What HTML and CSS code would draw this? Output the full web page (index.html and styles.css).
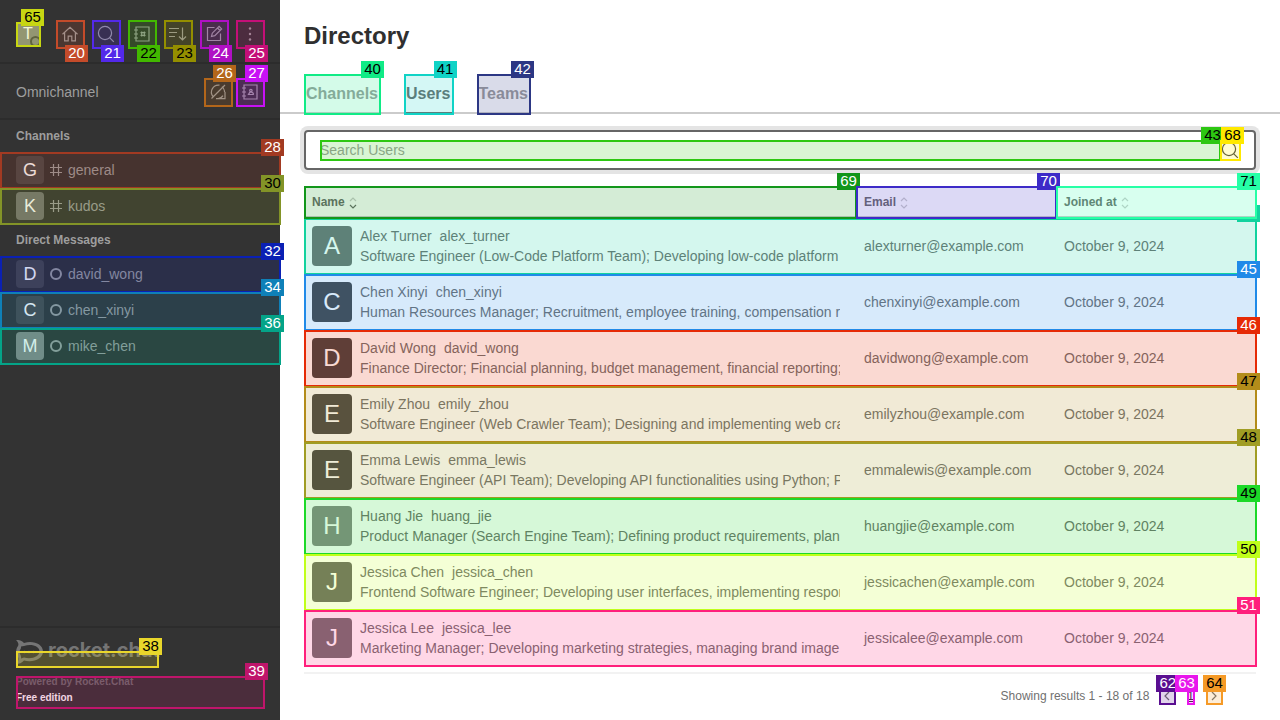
FILE: index.html
```html
<!DOCTYPE html>
<html lang="en">
<head>
<meta charset="utf-8">
<meta name="viewport" content="width=device-width, initial-scale=1">
<title>Directory</title>
<link rel="stylesheet" href="styles.css">
</head>
<body>
<svg class="defs" aria-hidden="true">
  <symbol id="hash" viewBox="0 0 12 12"><path d="M3.5 0v12M8.5 0v12M0 3.5h12M0 8.5h12"/></symbol>
  <symbol id="ring" viewBox="0 0 12 12"><circle cx="6" cy="6" r="5" stroke-width="2"/></symbol>
  <symbol id="search" viewBox="0 0 20 20"><circle cx="9" cy="9" r="6.6"/><path d="M13.8 13.8l4 4"/></symbol>
  <symbol id="sort" viewBox="0 0 8 12"><path class="up" d="M1 4l3-3 3 3"/><path class="down" d="M1 8l3 3 3-3"/></symbol>
</svg>
<div class="app">
  <aside class="sidebar">
    <header class="topbar">
      <button class="avatar avatar-me" aria-label="User menu">T<i class="presence"></i><span class="mark c65"><b>65</b></span></button>
      <div class="tools">
        <button class="tool" aria-label="Home"><svg viewBox="0 0 20 20"><path d="M2.5 10.2L10 3.4l7.500 6.800M4.600 8.600v8.200h3.600v-4.700h3.600v4.700h3.600V8.600"/></svg><span class="mark below c20"><b>20</b></span></button>
        <button class="tool" aria-label="Search"><svg><use href="#search"/></svg><span class="mark below c21"><b>21</b></span></button>
        <button class="tool" aria-label="Directory"><svg viewBox="0 0 20 20"><path d="M4 3h13v14H4zM2 6h4M2 10h4M2 14h4M9.700 7.500v5M12.300 7.500v5M8.500 8.700h5M8.500 11.300h5"/></svg><span class="mark below dark c22"><b>22</b></span></button>
        <button class="tool" aria-label="Sort"><svg viewBox="0 0 20 20"><path d="M1 4.500h10M1 8.500h8M1 12.500h6M14.500 3.500v12M11 12.500l3.500 3.500 3.500-3.500"/></svg><span class="mark below dark c23"><b>23</b></span></button>
        <button class="tool" aria-label="Create new"><svg viewBox="0 0 20 20"><path d="M10.500 3.500h-7v13h13v-7M7.500 12.500l.8-3.300 6.800-6.800 2.500 2.500-6.800 6.800zM13.500 4l2.500 2.500"/></svg><span class="mark below c24"><b>24</b></span></button>
        <button class="tool" aria-label="More"><svg viewBox="0 0 20 20"><g class="dots"><circle cx="10" cy="4.500" r="1.200"/><circle cx="10" cy="10" r="1.200"/><circle cx="10" cy="15.500" r="1.200"/></g></svg><span class="mark below c25"><b>25</b></span></button>
      </div>
    </header>
    <section class="omni">
      <h2>Omnichannel</h2>
      <div class="tools">
        <button class="tool" aria-label="Turn on answer chats"><svg viewBox="0 0 20 20"><path d="M16.500 10V9A7 7 0 0 0 14 4.600M11.500 3.200A7 7 0 0 0 5 14.500M3.500 16.500L17 3M8 16.600h9v-6.600M8 16.600a7 7 0 0 0 7-3"/></svg><span class="mark c26"><b>26</b></span></button>
        <button class="tool" aria-label="Contacts"><svg viewBox="0 0 20 20"><path d="M4 3h13v14H4zM2 6h4M2 10h4M2 14h4M8.500 12.500h4.800v-1.300l-1.400-1h-2z"/><circle cx="10.900" cy="8.500" r="1.200"/></svg><span class="mark c27"><b>27</b></span></button>
      </div>
    </section>
    <nav class="rooms">
      <h3>Channels</h3>
      <a class="room" href="#"><span class="avatar g72">G</span><svg><use href="#hash"/></svg>general<span class="mark c28"><b>28</b></span></a>
      <a class="room" href="#"><span class="avatar g115">K</span><svg><use href="#hash"/></svg>kudos<span class="mark dark c30"><b>30</b></span></a>
      <h3>Direct Messages</h3>
      <a class="room" href="#"><span class="avatar g72">D</span><svg><use href="#ring"/></svg>david_wong<span class="mark c32"><b>32</b></span></a>
      <a class="room" href="#"><span class="avatar g72">C</span><svg><use href="#ring"/></svg>chen_xinyi<span class="mark c34"><b>34</b></span></a>
      <a class="room" href="#"><span class="avatar g136">M</span><svg><use href="#ring"/></svg>mike_chen<span class="mark c36"><b>36</b></span></a>
    </nav>
    <footer class="side-footer">
      <a class="logo" href="#"><svg viewBox="0 0 28 24" aria-hidden="true"><path class="flame" fill-rule="evenodd" d="M0 0C3 0 6 .5 8 3c9-3 19 1 19 8.500S17 23 8 20.500C6 23 3 24 0 24c2-2 3-4.500 2-7-2.500-3-2.500-7.500 0-11C3 4 2 2 0 0zM5 6.500c.5 2-1.500 3-1.500 5.500 0 2.500 2 3 1.500 6.500l3-1c8 2 15.500-1 15.500-6S16 3.500 8 6z"/><g class="flame"><circle cx="8.500" cy="12" r="1.200"/><circle cx="13" cy="12" r="1.200"/><circle cx="17.500" cy="12" r="1.200"/></g></svg><span>rocket.chat</span><span class="mark dark c38"><b>38</b></span></a>
      <div class="edition"><span class="powered">Powered by Rocket.Chat</span><a href="#">Free edition</a><span class="mark c39"><b>39</b></span></div>
    </footer>
  </aside>

  <main class="main">
    <h1>Directory</h1>
    <div class="tabs" role="tablist">
      <button class="tab" role="tab">Channels<span class="mark dark c40"><b>40</b></span></button>
      <button class="tab selected" role="tab" aria-selected="true">Users<span class="mark dark c41"><b>41</b></span></button>
      <button class="tab" role="tab">Teams<span class="mark c42"><b>42</b></span></button>
    </div>
    <div class="content">
      <div class="search">
        <label class="field"><input type="text" placeholder="Search Users" aria-label="Search Users"><span class="mark dark c43"><b>43</b></span></label>
        <span class="field-icon"><svg><use href="#search"/></svg><span class="mark dark c68"><b>68</b></span></span>
      </div>
      <table>
        <colgroup><col><col class="col-side"><col class="col-side"></colgroup>
        <thead><tr>
          <th scope="col">Name<svg class="sort asc"><use href="#sort"/></svg><span class="mark c69"><b>69</b></span></th>
          <th scope="col">Email<svg class="sort"><use href="#sort"/></svg><span class="mark c70"><b>70</b></span></th>
          <th scope="col">Joined at<svg class="sort"><use href="#sort"/></svg><span class="mark dark c71"><b>71</b></span></th>
        </tr></thead>
        <tbody>
          <tr><td><div class="person"><span class="avatar g112">A</span><div class="info"><div><span>Alex Turner</span><span class="user">alex_turner</span></div><div>Software Engineer (Low-Code Platform Team); Developing low-code platform</div></div></div><span class="mark dark c44"><b></b></span></td><td>alexturner@example.com</td><td>October 9, 2024</td></tr>
          <tr><td><div class="person"><span class="avatar g70">C</span><div class="info"><div><span>Chen Xinyi</span><span class="user">chen_xinyi</span></div><div>Human Resources Manager; Recruitment, employee training, compensation review</div></div></div><span class="mark c45"><b>45</b></span></td><td>chenxinyi@example.com</td><td>October 9, 2024</td></tr>
          <tr><td><div class="person"><span class="avatar g66">D</span><div class="info"><div><span>David Wong</span><span class="user">david_wong</span></div><div>Finance Director; Financial planning, budget management, financial reporting; Finance</div></div></div><span class="mark c46"><b>46</b></span></td><td>davidwong@example.com</td><td>October 9, 2024</td></tr>
          <tr><td><div class="person"><span class="avatar g70">E</span><div class="info"><div><span>Emily Zhou</span><span class="user">emily_zhou</span></div><div>Software Engineer (Web Crawler Team); Designing and implementing web crawlers</div></div></div><span class="mark dark c47"><b>47</b></span></td><td>emilyzhou@example.com</td><td>October 9, 2024</td></tr>
          <tr><td><div class="person"><span class="avatar g70">E</span><div class="info"><div><span>Emma Lewis</span><span class="user">emma_lewis</span></div><div>Software Engineer (API Team); Developing API functionalities using Python; Python</div></div></div><span class="mark dark c48"><b>48</b></span></td><td>emmalewis@example.com</td><td>October 9, 2024</td></tr>
          <tr><td><div class="person"><span class="avatar g136">H</span><div class="info"><div><span>Huang Jie</span><span class="user">huang_jie</span></div><div>Product Manager (Search Engine Team); Defining product requirements, planning</div></div></div><span class="mark dark c49"><b>49</b></span></td><td>huangjie@example.com</td><td>October 9, 2024</td></tr>
          <tr><td><div class="person"><span class="avatar g101">J</span><div class="info"><div><span>Jessica Chen</span><span class="user">jessica_chen</span></div><div>Frontend Software Engineer; Developing user interfaces, implementing responsive design</div></div></div><span class="mark dark c50"><b>50</b></span></td><td>jessicachen@example.com</td><td>October 9, 2024</td></tr>
          <tr><td><div class="person"><span class="avatar g112">J</span><div class="info"><div><span>Jessica Lee</span><span class="user">jessica_lee</span></div><div>Marketing Manager; Developing marketing strategies, managing brand image</div></div></div><span class="mark c51"><b>51</b></span></td><td>jessicalee@example.com</td><td>October 9, 2024</td></tr>
        </tbody>
      </table>
      <footer class="pager">
        <span class="results">Showing results 1 - 18 of 18</span>
        <nav class="pages">
          <button aria-label="Previous page"><svg viewBox="0 0 16 16"><path d="M10 4L6 8l4 4"/></svg><span class="mark c62"><b>62</b></span></button>
          <button class="current">1<span class="mark c63"><b>63</b></span></button>
          <button aria-label="Next page"><svg viewBox="0 0 16 16"><path d="M6 4l4 4-4 4"/></svg><span class="mark dark c64"><b>64</b></span></button>
        </nav>
      </footer>
    </div>
  </main>
</div>
</body>
</html>
```

FILE: styles.css
```css
* { box-sizing: border-box; }
body {
  margin: 0;
  font: 14px/20px "Liberation Sans", Arial, sans-serif;
  color: #707070;
  background: #fff;
  overflow: hidden;
}
h1, h2, h3 { margin: 0; }
a { color: inherit; text-decoration: none; }
button { margin: 0; padding: 0; border: 0; background: none; color: inherit; font: inherit; position: relative; }
svg { fill: none; stroke: currentColor; stroke-width: 1.2; flex: none; }
.defs { display: none; }
.app { display: flex; min-height: 100vh; }

/* Numbered element markers */
.mark {
  position: absolute;
  z-index: 1;
  inset: 0 -1px -1px 0;
  background: color-mix(in srgb, var(--c) 18%, transparent);
  box-shadow: inset 0 0 0 2px var(--c);
  pointer-events: none;
}
.mark b {
  position: absolute;
  top: -13px;
  right: -3px;
  width: 23px;
  height: 17px;
  background: var(--c);
  color: #fff;
  font: 15px/15px "Liberation Sans", Arial, sans-serif;
  text-align: center;
}
.mark.below b { top: auto; bottom: -13px; }
.mark.dark b, .c65 b { color: #000; }
.c20 { --c: #c44b2a; } .c21 { --c: #5329ea; } .c22 { --c: #42b800; }
.c23 { --c: #948f00; } .c24 { --c: #b010c4; } .c25 { --c: #c40f78; }
.c26 { --c: #b3661a; } .c27 { --c: #c811f5; } .c28 { --c: #a23a22; }
.c30 { --c: #839427; } .c32 { --c: #0a20b4; } .c34 { --c: #0f80b8; }
.c36 { --c: #04a488; } .c38 { --c: #e9d62b; } .c39 { --c: #bf156b; }
.c40 { --c: #10eb86; } .c41 { --c: #10d3c6; } .c42 { --c: #2c3784; }
.c43 { --c: #2dc712; } .c44 { --c: #12d29e; } .c45 { --c: #208ae8; }
.c46 { --c: #e62a06; } .c47 { --c: #b38c1a; } .c48 { --c: #a09d24; }
.c49 { --c: #1cd928; } .c50 { --c: #c0ff1a; } .c51 { --c: #ff1f7c; }
.c62 { --c: #5a0f91; } .c63 { --c: #e816ec; } .c64 { --c: #f59a27; }
.c65 { --c: #c7d612; } .c68 { --c: #ffe900; } .c69 { --c: #12961a; }
.c70 { --c: #3d2bc8; } .c71 { --c: #26ffa6; }

/* Avatars */
.avatar { flex: none; display: flex; align-items: center; justify-content: center; border-radius: 4px; color: #fff; }
.g66 { background: #424242; }
.g70 { background: #464646; }
.g72 { background: #484848; }
.g101 { background: #656565; }
.g112 { background: #707070; }
.g115 { background: #737373; }
.g136 { background: #888; }

/* Sidebar */
.sidebar { width: 280px; flex: none; display: flex; flex-direction: column; background: #333; color: #9e9e9e; }
.topbar, .omni { display: flex; align-items: center; justify-content: space-between; border-bottom: 2px solid #2c2c2c; }
.topbar { padding: 20px 16px 14px; }
.omni { padding: 14px 16px 12px; }
.omni h2 { font-size: 14px; font-weight: 400; }
.tools { display: flex; gap: 8px; }
.omni .tools { gap: 4px; }
.tool { width: 28px; height: 28px; display: flex; align-items: center; justify-content: center; }
.tool svg { width: 20px; height: 20px; }
.dots { fill: currentColor; stroke: none; }
.avatar-me { width: 24px; height: 24px; background: #888; font-size: 16px; border-radius: 2px; }
.presence { position: absolute; right: -1px; bottom: -1px; width: 11px; height: 11px; border: 2px solid #4a4a4a; border-radius: 50%; background: #888; }
.rooms h3 { padding: 6px 16px; font-size: 12px; }
.room { position: relative; display: flex; align-items: center; gap: 6px; height: 36px; padding: 0 16px; }
.room .avatar { width: 28px; height: 28px; font-size: 18px; }
.room svg { width: 12px; height: 12px; }
.side-footer { margin-top: auto; padding: 12px 16px; border-top: 2px solid #2c2c2c; }
.logo { position: relative; display: flex; gap: 4px; width: 142px; height: 27px; color: #757575; }
.logo svg { width: 28px; height: 24px; }
.logo > span:not(.mark) { font: 700 20px/20px Inter, sans-serif; }
.logo .mark { top: 11px; }
.flame { fill: currentColor; stroke: none; }
.edition { position: relative; display: flex; flex-direction: column; gap: 4px; margin-top: 9px; padding-bottom: 4px; font-size: 10px; font-weight: 700; line-height: 12px; color: #fff; }
.powered { color: #6c6c6c; }

/* Directory */
.main { flex: 1; min-width: 0; display: flex; flex-direction: column; }
h1 { padding: 20px 24px 22px; font-size: 24px; line-height: 32px; color: #2f2f2f; }
.tabs { display: flex; gap: 24px; padding: 0 24px; box-shadow: inset 0 -2px #cbcbcb; }
.tab { height: 40px; padding: 0 2px; font-size: 16px; font-weight: 700; color: #9e9e9e; }
.tab.selected { color: #6c6c6c; box-shadow: inset 0 -2px #6c6c6c; }
.content { flex: 1; display: flex; flex-direction: column; padding: 16px 24px 0; }
.search { display: flex; height: 40px; padding: 8px 14px; border: 2px solid #666; border-radius: 4px; box-shadow: 0 0 0 4px #e4e4e4; margin-bottom: 16px; }
.field { position: relative; flex: 1; display: flex; }
input { width: 100%; height: 20px; padding: 0; border: 0; outline: 0; font: inherit; color: #2f2f2f; }
input::placeholder { color: #9e9e9e; opacity: 1; }
.field-icon { position: relative; width: 20px; height: 20px; }
.field-icon svg { display: block; width: 20px; height: 20px; color: #444; }

table { width: 100%; table-layout: fixed; border-spacing: 0; }
.col-side { width: 200px; }
th { position: relative; z-index: 2; height: 32px; padding: 0 8px; background: #fff; box-shadow: inset 0 -2px #cbcbcb; font-size: 12px; line-height: 16px; text-align: left; color: #6c6c6c; }
.sort { width: 8px; height: 12px; margin-left: 4px; vertical-align: -3px; color: #ccc; }
.sort.asc { --down: #6c6c6c; }
.down { stroke: var(--down, currentColor); }
tbody tr { position: relative; }
td { height: 56px; padding: 0 8px; white-space: nowrap; }
td:first-child { padding-right: 16px; }
.person { display: flex; align-items: center; gap: 8px; }
.person .avatar { width: 40px; height: 40px; font-size: 24px; }
.info { flex: 1; min-width: 0; overflow: hidden; }
.user { margin-left: 8px; }

.pager { display: flex; align-items: center; justify-content: flex-end; gap: 10px; height: 46px; margin-top: 6px; padding-right: 34px; border-top: 2px solid #f2f2f2; font-size: 12px; line-height: 16px; }
.pages { display: flex; gap: 12px; }
.pages button { height: 16px; }
.pages svg { display: block; width: 16px; height: 16px; }
.current { color: #2f2f2f; text-decoration: underline; }
```
